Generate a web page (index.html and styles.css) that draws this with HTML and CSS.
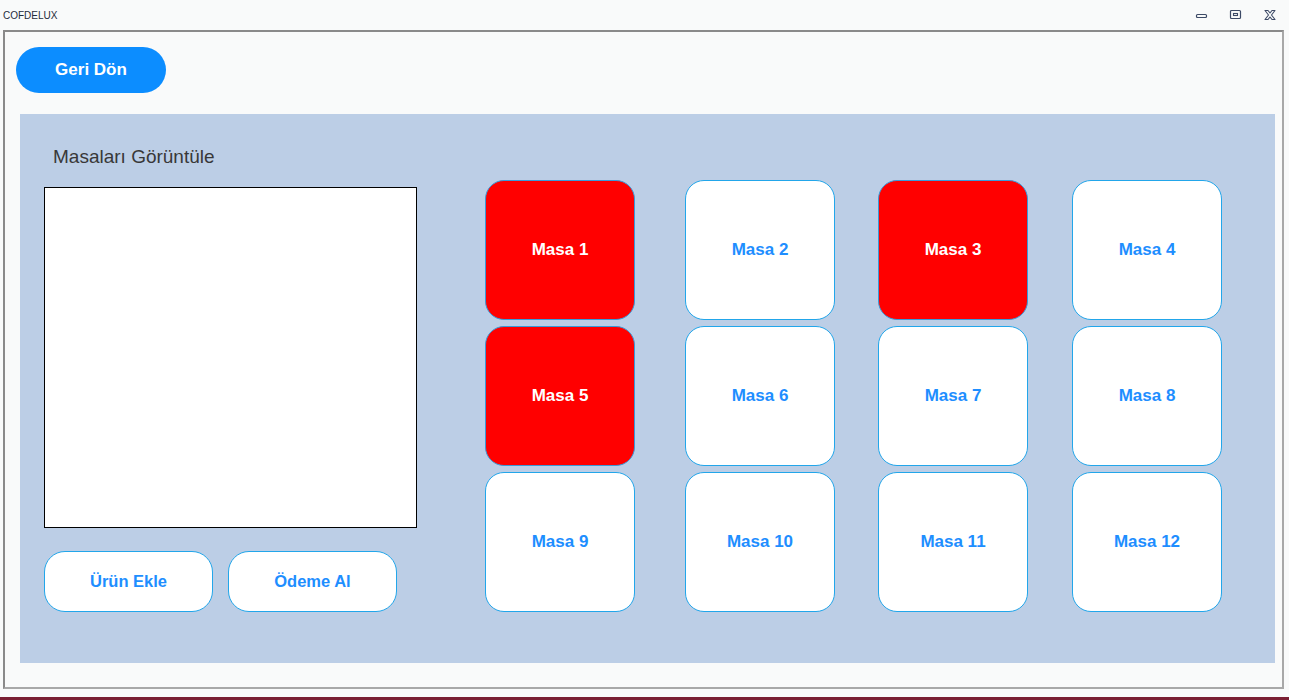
FILE: index.html
```html
<!DOCTYPE html>
<html lang="tr">
<head>
<meta charset="utf-8">
<title>COFDELUX</title>
<link rel="stylesheet" href="styles.css">
</head>
<body>
<div class="titlebar">
  <span class="title">COFDELUX</span>
  <div class="controls">
    <svg class="ctl" width="14" height="12" viewBox="0 0 14 12"><rect x="1.5" y="5.5" width="10" height="3" rx="1" fill="none" stroke="#3d4a66" stroke-width="1.2"/></svg>
    <svg class="ctl" width="14" height="12" viewBox="0 0 14 12"><rect x="1.5" y="1.5" width="10" height="8" rx="1" fill="none" stroke="#3d4a66" stroke-width="1.2"/><rect x="4.5" y="4.5" width="4" height="2" fill="none" stroke="#3d4a66" stroke-width="1.1"/></svg>
    <svg class="ctl" width="14" height="12" viewBox="0 0 14 12"><path d="M2 1.5 L5 1.5 L7 4 L9 1.5 L12 1.5 L8.5 6 L12 10.5 L9 10.5 L7 8 L5 10.5 L2 10.5 L5.5 6 Z" fill="none" stroke="#3d4a66" stroke-width="1.1" stroke-linejoin="round"/></svg>
  </div>
</div>
<div class="frame">
  <button class="back">Geri Dön</button>
  <div class="panel">
    <div class="left">
      <div class="heading">Masaları Görüntüle</div>
      <div class="listbox"></div>
      <div class="actions">
        <button class="action">Ürün Ekle</button>
        <button class="action">Ödeme Al</button>
      </div>
    </div>
    <div class="tables">
      <button class="table busy">Masa 1</button>
      <button class="table">Masa 2</button>
      <button class="table busy">Masa 3</button>
      <button class="table">Masa 4</button>
      <button class="table busy">Masa 5</button>
      <button class="table">Masa 6</button>
      <button class="table">Masa 7</button>
      <button class="table">Masa 8</button>
      <button class="table">Masa 9</button>
      <button class="table">Masa 10</button>
      <button class="table">Masa 11</button>
      <button class="table">Masa 12</button>
    </div>
  </div>
</div>
<div class="taskstrip"></div>
</body>
</html>
```
FILE: styles.css
```css
* { box-sizing: border-box; }
html, body {
  margin: 0;
  padding: 0;
}
body {
  width: 1289px;
  height: 700px;
  overflow: hidden;
  background: #f9fafa;
  font-family: "Liberation Sans", Arial, sans-serif;
  display: flex;
  flex-direction: column;
}
.titlebar {
  height: 30px;
  display: flex;
  align-items: center;
  justify-content: space-between;
  padding-left: 3px;
}
.title {
  font-size: 10px;
  color: #1f2c3c;
  margin-top: 0;
}
.controls {
  display: flex;
  gap: 20px;
  margin-right: 12px;
  align-items: center;
}
.ctl { display: block; }
.frame {
  margin-left: 3px;
  width: 1281px;
  height: 659px;
  border: 2px solid #8a8a8a;
  border-right-color: #a8a8a8;
  border-bottom-color: #a8a8a8;
  padding: 15px 0 0 11px;
}
button {
  font-family: "Liberation Sans", Arial, sans-serif;
  font-weight: bold;
  cursor: pointer;
  padding: 0;
}
.back {
  display: block;
  width: 150px;
  height: 46px;
  border: none;
  border-radius: 23px;
  background: #0c8dff;
  color: #ffffff;
  font-size: 17px;
}
.panel {
  margin-top: 21px;
  margin-left: 4px;
  width: 1255px;
  height: 549px;
  background: #bccee6;
  display: flex;
  padding-left: 24px;
}
.left {
  width: 373px;
  display: flex;
  flex-direction: column;
}
.heading {
  margin-top: 32px;
  padding-left: 9px;
  font-size: 19px;
  line-height: 22px;
  color: #383838;
}
.listbox {
  margin-top: 19px;
  width: 373px;
  height: 341px;
  background: #ffffff;
  border: 1px solid #000000;
}
.actions {
  margin-top: 23px;
  display: flex;
  gap: 15px;
}
.action {
  width: 169px;
  height: 61px;
  border-radius: 21px;
  border: 1px solid #22a6ea;
  background: #ffffff;
  color: #1e8eff;
  font-size: 16.5px;
}
.tables {
  margin-left: 68px;
  margin-top: 66px;
  display: grid;
  grid-template-columns: 200px 193px 194px 150px;
  grid-auto-rows: 140px;
  row-gap: 6px;
  align-content: start;
}
.table {
  width: 150px;
  height: 140px;
  border-radius: 19px;
  border: 1px solid #22a6ea;
  background: #ffffff;
  color: #1e8eff;
  font-size: 17px;
}
.table.busy {
  background: #ff0000;
  color: #ffffff;
  border-color: #3a9ad8;
}
.taskstrip {
  margin-top: 8px;
  height: 3px;
  background: #7a1f33;
}
```
